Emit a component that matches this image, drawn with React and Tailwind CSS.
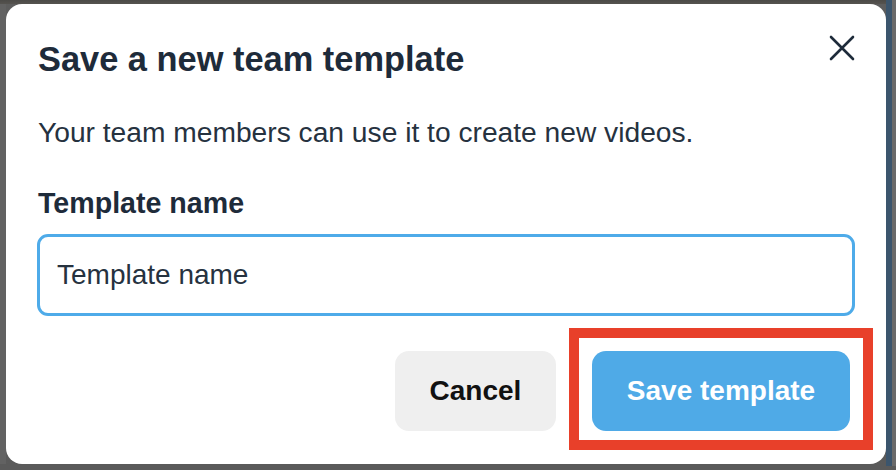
export default function App() {
  return (
    <div className="w-[896px] h-[470px] overflow-hidden bg-[linear-gradient(to_bottom,#4b4a47_0px,#55534f_4px,#5d5d5d_4px,#5a5a5a_100%)] font-['Liberation_Sans',Arial,sans-serif]">
      <div className="flex flex-row pt-[4px] h-[470px]">
        <div className="w-[6px] shrink-0 h-[460px] bg-[#626262]" />
        <div className="relative w-[880px] h-[460px] shrink-0 bg-white rounded-[16px] pt-[38px] pl-[31px] pr-[31px]">
          <div className="flex flex-row items-start justify-between">
            <h1 className="text-[34.4px] leading-none font-bold text-[#1e2b3a] pl-[1px]">
              Save a new team template
            </h1>
            <button className="w-[30px] h-[30px] flex items-center justify-center mt-[-9px] mr-[-2px]">
              <svg width="26" height="26" viewBox="0 0 26 26" fill="none">
                <path d="M2 2 L24 24 M24 2 L2 24" stroke="#1e2b3a" strokeWidth="2.6" strokeLinecap="round" />
              </svg>
            </button>
          </div>
          <p className="mt-[42px] text-[28.2px] leading-none text-[#26323f] pl-[1px]">
            Your team members can use it to create new videos.
          </p>
          <div className="mt-[42px] text-[28.6px] leading-none font-bold text-[#1e2b3a] pl-[1px]">
            Template name
          </div>
          <div className="mt-[17px] h-[82px] rounded-[11px] border-[3px] border-[#4eabe9] flex items-center pl-[17px]">
            <span className="text-[28px] leading-none text-[#26323f]">Template name</span>
          </div>
          <div className="mt-[35px] flex flex-row justify-end gap-[36px] pr-[5px]">
            <button className="w-[161px] h-[80px] rounded-[14px] bg-[#efefef] text-[28px] leading-none font-bold text-[#111111] flex items-center justify-center">
              Cancel
            </button>
            <div className="relative">
              <button className="w-[258px] h-[80px] rounded-[14px] bg-[#4faae7] text-[28px] leading-none font-bold text-white flex items-center justify-center">
                Save template
              </button>
              <div className="absolute left-[-23px] top-[-23px] w-[304px] h-[122px] border-[10px] border-[#e8402a] pointer-events-none" />
            </div>
          </div>
        </div>
        <div className="w-[6px] shrink-0 h-[466px] mt-[-4px] bg-[#3b556d]" />
        <div className="w-[4px] shrink-0 h-[466px] mt-[-4px] bg-[#6a6a6a]" />
      </div>
    </div>
  );
}
